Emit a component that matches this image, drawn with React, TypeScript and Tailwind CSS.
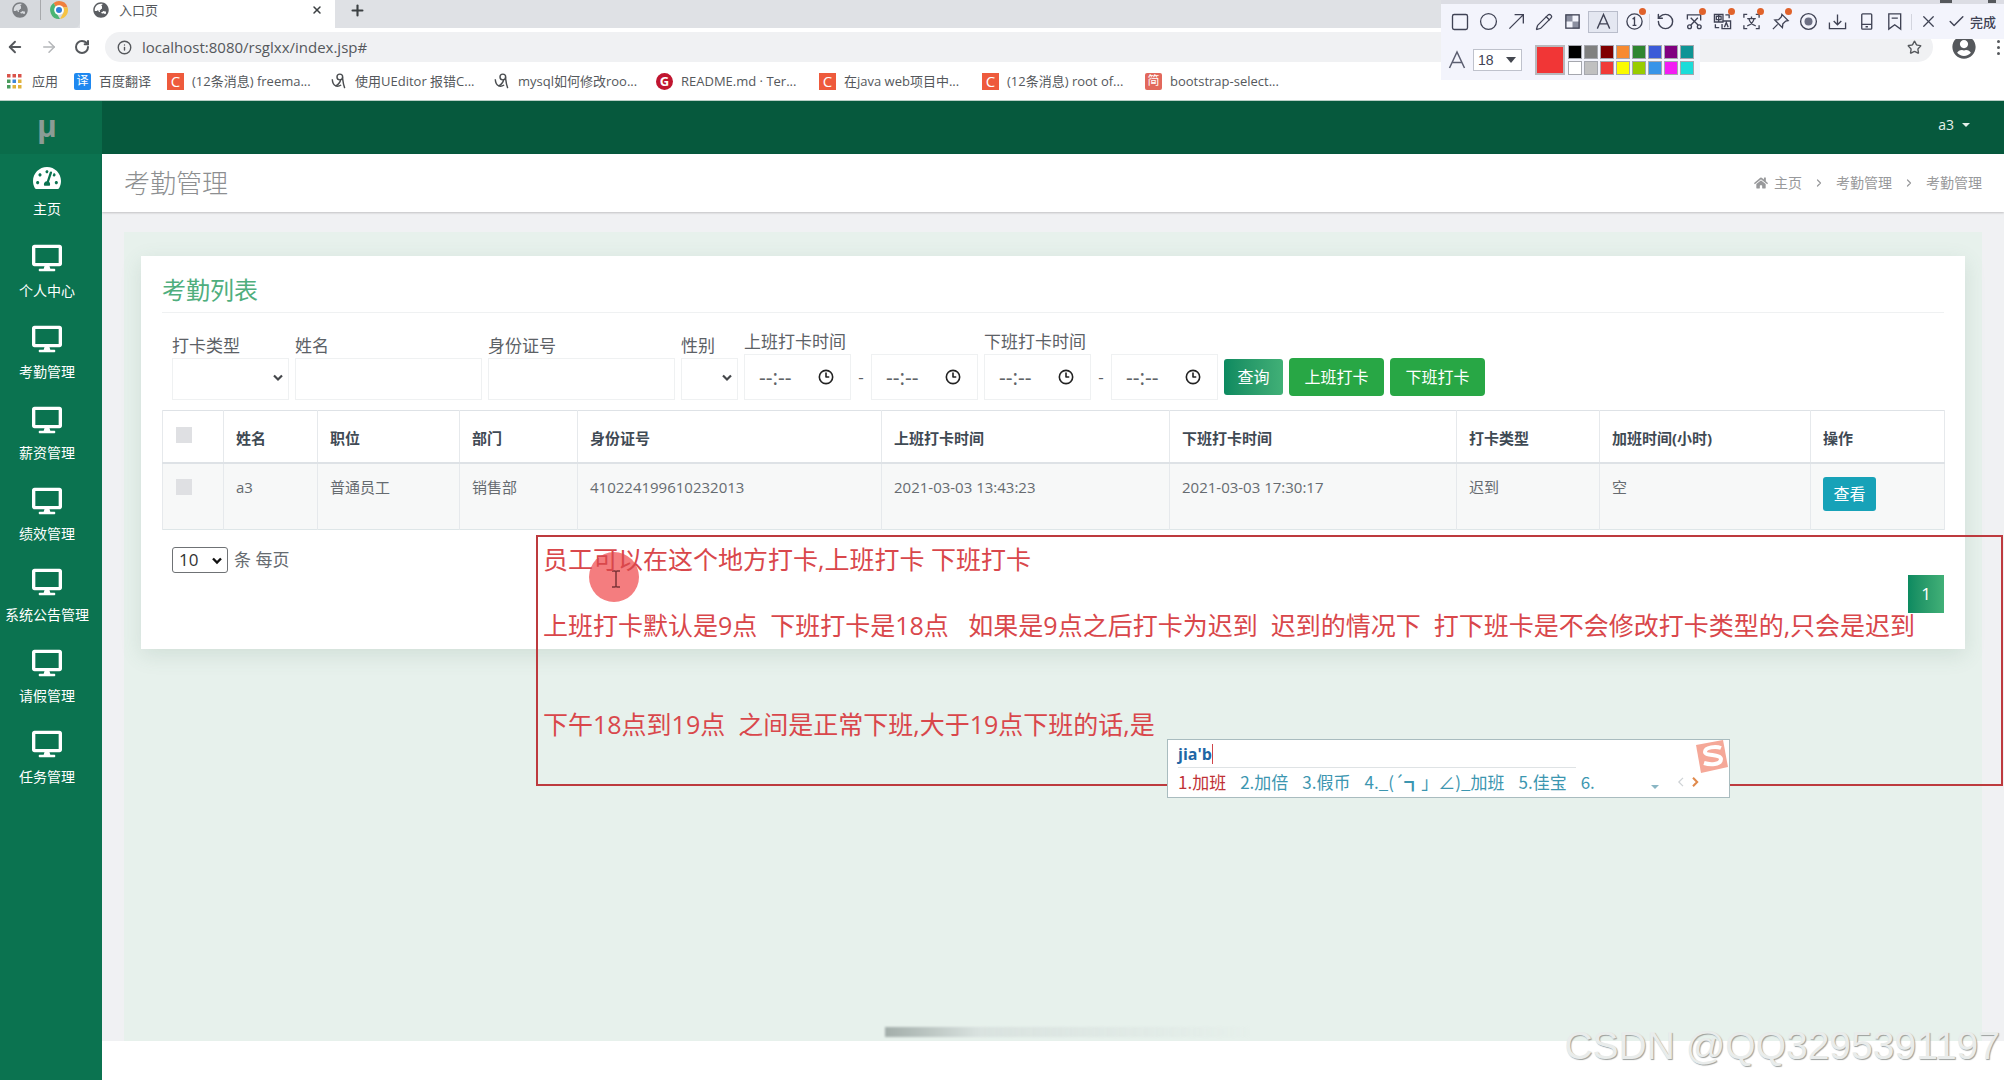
import React from "react";
import {
  ArrowLeft,
  ArrowRight,
  Check,
  ChevronRight,
  Circle,
  Clock3,
  Info,
  Pencil,
  Plus,
  RotateCcw,
  RotateCw,
  Square,
  Star,
  X,
} from "lucide-react";
import { FaDesktop, FaGlobeAsia, FaHome, FaTachometerAlt, FaUserCircle } from "react-icons/fa";

const FONT = "font-['Open_Sans','Noto_Sans_CJK_SC',sans-serif]";

/* ---------- browser chrome ---------- */

function BrowserSwirl() {
  return (
    <svg viewBox="0 0 20 20" className="size-5">
      <path d="M10 1a9 9 0 0 1 8.6 6.4L13 7a4.500 4.500 0 0 0-6 .4L4.600 3A9 9 0 0 1 10 1z" fill="#f0803c" />
      <path d="M18.600 7.400A9 9 0 0 1 11 19l3-5.500A4.500 4.500 0 0 0 13 7z" fill="#f6c343" />
      <path d="M11 19A9 9 0 0 1 4.600 3L7 7.400a4.500 4.500 0 0 0 1 6.600z" fill="#4bb573" />
      <circle cx="10" cy="10" r="4.800" fill="#fff" />
      <circle cx="10" cy="10" r="3" fill="#2f7fd6" />
    </svg>
  );
}

function AppsGrid() {
  const colours = ["#d9534a", "#d9534a", "#d9534a", "#4a9c5d", "#3f86d8", "#e0b23a", "#4a9c5d", "#e0b23a", "#e0b23a"];
  return (
    <svg viewBox="0 0 15 15" className="size-[15px]">
      {colours.map((c, i) => (
        <rect key={i} x={(i % 3) * 5.5} y={Math.floor(i / 3) * 5.5} width="3.500" height="3.500" fill={c} />
      ))}
    </svg>
  );
}

function BirdMark() {
  return (
    <svg viewBox="0 0 16 18" className="h-4 w-[17px]" fill="none" stroke="#4a4d50" strokeWidth="1.600">
      <path d="M1 7c.2 4 1.500 6.500 4 7.500C8 13 10 10.500 10.500 7" />
      <circle cx="9.500" cy="4.500" r="3.200" />
      <path d="M12.500 5c.6 5 .8 8 2.500 12M5 14.500c2 .8 4 .2 6-1" />
    </svg>
  );
}

function LetterMark({ text, tone }: { text: string; tone: "blue" | "orange" | "crimson" | "rose" }) {
  const tones = {
    blue: "bg-[#1e88f0] rounded-[2px] text-[12px]",
    orange: "bg-[#ee5a3c] text-[15px]",
    crimson: "bg-[#c0152f] rounded-full text-[13px] font-bold",
    rose: "bg-[#e2685c] rounded-[2px] text-[12px]",
  };
  return (
    <span className={`flex size-[17px] items-center justify-center leading-none text-white ${tones[tone]}`}>{text}</span>
  );
}

const bookmarks = [
  { icon: <LetterMark text="C" tone="orange" />, label: "(12条消息) freema..." },
  { icon: <BirdMark />, label: "使用UEditor 报错C..." },
  { icon: <BirdMark />, label: "mysql如何修改roo..." },
  { icon: <LetterMark text="G" tone="crimson" />, label: "README.md · Ter..." },
  { icon: <LetterMark text="C" tone="orange" />, label: "在java web项目中..." },
  { icon: <LetterMark text="C" tone="orange" />, label: "(12条消息) root of..." },
  { icon: <LetterMark text="简" tone="rose" />, label: "bootstrap-select..." },
];

function BrowserChrome() {
  return (
    <header className="bg-white text-[#55585c]">
      <div className="flex h-7 bg-[#dfe1e5]">
        <div className="flex w-20 items-center rounded-br-md bg-[#d6d9dd] pb-2 pl-3">
          <FaGlobeAsia className="size-4 text-[#7b7e82]" />
          <span className="ml-3 h-5 w-px bg-[#a7a9ac]" />
          <span className="ml-2">
            <BrowserSwirl />
          </span>
        </div>
        <div className="flex w-[255px] items-center bg-white pr-3 pb-2 pl-[13px]">
          <FaGlobeAsia className="size-4 text-[#5b5e62]" />
          <span className="ml-2.5 text-[13px] leading-5">入口页</span>
          <button aria-label="关闭标签页" className="ml-auto">
            <X className="size-3 text-[#3c4043]" strokeWidth={3} />
          </button>
        </div>
        <div className="flex grow items-center rounded-bl-md pb-2 pl-[14px]">
          <button aria-label="新标签页">
            <Plus className="size-[17px] text-[#3c4043]" strokeWidth={3} />
          </button>
        </div>
      </div>
      <div className="flex h-[34px] items-center pt-1">
        <button aria-label="后退" className="ml-1.5">
          <ArrowLeft className="size-[18px]" strokeWidth={2.5} />
        </button>
        <button aria-label="前进" className="ml-4">
          <ArrowRight className="size-[18px] text-[#b4b6b9]" strokeWidth={2} />
        </button>
        <button aria-label="刷新" className="ml-4">
          <RotateCw className="size-4" strokeWidth={3} />
        </button>
        <div className="mr-[26px] ml-[15px] flex h-[30px] grow items-center rounded-full bg-[#f0f1f3] pr-2.5 pl-3">
          <Info className="size-[15px]" strokeWidth={2.2} />
          <label htmlFor="address" className="ml-2.5 flex grow">
            <input
              id="address"
              aria-label="地址"
              defaultValue="localhost:8080/rsglxx/index.jsp#"
              className="h-6 grow bg-transparent text-[15px] leading-6 outline-none"
            />
          </label>
        </div>
        <button aria-label="收藏" className="-ml-[52px]">
          <Star className="size-[15px]" strokeWidth={2.2} />
        </button>
        <button aria-label="用户" className="ml-[30px]">
          <FaUserCircle className="size-6" />
        </button>
        <button aria-label="菜单" className="mr-1 ml-[21px] flex flex-col gap-[3px]">
          <span className="size-[3px] rounded-full bg-[#55585c]" />
          <span className="size-[3px] rounded-full bg-[#55585c]" />
          <span className="size-[3px] rounded-full bg-[#55585c]" />
        </button>
      </div>
      <nav className="flex h-[39px] items-center border-b border-[#b9cfc6] text-[13px] leading-5">
        <a href="#" className="flex w-[67px] items-center gap-2.5 pl-[7px]">
          <AppsGrid />
          应用
        </a>
        <a href="#" className="flex w-[93px] items-center gap-2 pl-[7px]">
          <LetterMark text="译" tone="blue" />
          百度翻译
        </a>
        <div className="flex pl-[7px]">
          {bookmarks.map((b) => (
            <a key={b.label} href="#" className="flex w-[163px] items-center gap-2 whitespace-nowrap">
              {b.icon}
              {b.label}
            </a>
          ))}
        </div>
      </nav>
    </header>
  );
}

/* ---------- snipping toolbar ---------- */

const ink = "#3f4254";

function Glyph({ children }: { children: React.ReactNode }) {
  return (
    <svg viewBox="0 0 20 20" className="size-[19px]" fill="none" stroke={ink} strokeWidth="1.400">
      {children}
    </svg>
  );
}

const drawTools = [
  { name: "矩形", icon: <Square className="size-5" strokeWidth={1.6} /> },
  { name: "椭圆", icon: <Circle className="size-[19px]" strokeWidth={1.6} /> },
  { name: "箭头", icon: <Glyph><path d="M2.500 17.500 17 3M8 2.800h9.200V12" /></Glyph> },
  { name: "画笔", icon: <Pencil className="size-[18px]" strokeWidth={1.7} /> },
  {
    name: "马赛克",
    icon: (
      <Glyph>
        <path d="M3 3h7v7H3zM10 10h7v7h-7z" fill="#8b8fa0" stroke="none" />
        <rect x="3" y="3" width="14" height="14" />
      </Glyph>
    ),
  },
  {
    name: "文字",
    active: true,
    icon: <Glyph><path d="M3.500 17.500 10 2.500l6.500 15M6 12.500h8" /></Glyph>,
  },
  {
    name: "序号",
    dot: true,
    icon: <Glyph><circle cx="10" cy="10" r="8" /><path d="M8 7.500 10 6v8M8 14h4" /></Glyph>,
  },
];

const actionTools = [
  { name: "撤销", icon: <RotateCcw className="size-[19px]" strokeWidth={1.8} /> },
  {
    name: "裁剪",
    dot: true,
    icon: (
      <Glyph>
        <path d="M2.500 8V3h14v6M6 6l8 8M13.500 6 6 14" />
        <circle cx="4.800" cy="15.500" r="2" />
        <circle cx="15" cy="15.500" r="2" />
      </Glyph>
    ),
  },
  {
    name: "翻译",
    dot: true,
    icon: (
      <Glyph>
        <path d="M1.500 2.500h9v8h-9zM3.500 4.500h5v3.500h-5zM6 2.500v8M11 9.500h7.500v8H9.500v-5M12 16l2-5 2 5M2.500 13v3.500h4M13 3h4v3.500" />
      </Glyph>
    ),
  },
  {
    name: "文字识别",
    dot: true,
    icon: (
      <Glyph>
        <path d="M2 6V2.500h3.500M14.500 2.500H18V6M2 14v3.500h3.500M18 14v3.500h-3.500M5.500 7h9M10 4.800V7M12.800 7c-1 4-3.500 6.500-7.300 7.500M7.200 7c1 4 3.500 6.500 7.300 7.500" />
      </Glyph>
    ),
  },
  {
    name: "钉住",
    dot: true,
    icon: <Glyph><path d="m11.500 2.500 6.500 6.500-2.500.5-3 3-.5 4-8-8 4-.5 3-3zM7 13l-5 5" /></Glyph>,
  },
  {
    name: "录屏",
    icon: <Glyph><circle cx="10" cy="10" r="8.300" /><circle cx="10" cy="10" r="4.200" fill="#6d7084" stroke="none" /></Glyph>,
  },
  { name: "保存", icon: <Glyph><path d="M1.500 11v6.500h17V11M10 2.500v11M6 9.500l4 4 4-4" /></Glyph> },
  {
    name: "发送到手机",
    icon: <Glyph><rect x="5" y="2" width="10.500" height="16" rx="1" /><path d="M5 13h10.500M9 15.500h2.500" /></Glyph>,
  },
  {
    name: "收藏截图",
    icon: <Glyph><path d="M4 2h12.500v16L10.200 13.500 4 18zM7 6.500h6.500" /></Glyph>,
  },
];

function ToolButton({ tool }: { tool: { name: string; icon: React.ReactNode; dot?: boolean; active?: boolean } }) {
  return (
    <button
      aria-label={tool.name}
      className={`relative flex h-[22px] flex-1 items-center justify-center ${
        tool.active ? "mx-0.5 border border-[#b9bdcb] bg-[#e4e7f1]" : ""
      }`}
    >
      {tool.icon}
      {tool.dot && <span className="absolute -top-[3px] right-0.5 size-[7px] rounded-full bg-[#e0622b]" />}
    </button>
  );
}

const palette = [
  "bg-black", "bg-[#808080]", "bg-[#800000]", "bg-[#f78a30]", "bg-[#2f8630]", "bg-[#3b5bd8]", "bg-[#800080]", "bg-[#0f9496]",
  "bg-white", "bg-[#c0c0c0]", "bg-[#f03a38]", "bg-[#fbfb00]", "bg-[#98cc00]", "bg-[#3894e8]", "bg-[#f31bf3]", "bg-[#1bdcd9]",
];

function SnipToolbar() {
  return (
    <div className="absolute top-0 right-0 z-20 w-[563px] text-[#3f4254]">
      <div className="flex h-1 items-start justify-end gap-9 bg-[#dcdde4] pr-2">
        <span className="h-[3px] w-3 bg-[#55585c]" />
        <span className="h-[3px] w-2 bg-[#55585c]" />
      </div>
      <div className="flex h-[35px] items-center bg-[#f3f4fc] pl-[5px]">
        <div className="flex w-[202px]">
          {drawTools.map((t) => (
            <ToolButton key={t.name} tool={t} />
          ))}
        </div>
        <span className="mx-px h-4 w-px bg-[#d3d5de]" />
        <div className="flex w-[258px]">
          {actionTools.map((t) => (
            <ToolButton key={t.name} tool={t} />
          ))}
        </div>
        <span className="mx-0.5 h-4 w-px bg-[#d3d5de]" />
        <button aria-label="取消" className="flex w-[29px] justify-center">
          <X className="size-[19px]" strokeWidth={1.6} />
        </button>
        <button className="flex items-center gap-1 pl-1 text-[13px] leading-5 font-medium whitespace-nowrap">
          <Check className="size-[19px]" strokeWidth={1.8} />
          完成
        </button>
      </div>
      <div className="flex h-[41px] w-[259px] items-center bg-[#f3f4fc] pl-1.5">
        <svg viewBox="0 0 20 20" className="size-5" fill="none" stroke="#5b5e70" strokeWidth="1.500">
          <path d="M2.500 18 10 2l7.500 16M5.500 12.500h9" />
        </svg>
        <div className="relative ml-1.5">
          <select
            id="snip-size"
            aria-label="字号"
            defaultValue="18"
            className="block h-[22px] w-[49px] appearance-none border border-[#bfc2cc] bg-white pl-1 font-['Liberation_Sans',sans-serif] text-[14px] leading-5"
          >
            <option>18</option>
          </select>
          <span className="pointer-events-none absolute top-2 right-1.5 border-x-[5px] border-t-[6px] border-x-transparent border-t-[#44474f]" />
        </div>
        <button aria-label="当前颜色" className="ml-[13px] size-[30px] border-2 border-[#b9b9bd] bg-[#f13636]" />
        <div className="ml-[3px] grid grid-cols-8 gap-[2px]">
          {palette.map((c) => (
            <button key={c} aria-label="颜色" className={`size-[14px] border border-[#a5a7ae] ${c}`} />
          ))}
        </div>
      </div>
    </div>
  );
}

/* ---------- application ---------- */

const menu = ["个人中心", "考勤管理", "薪资管理", "绩效管理", "系统公告管理", "请假管理", "任务管理"];

function Sidebar() {
  return (
    <aside className="w-[102px] shrink-0 bg-[#0b7350] text-white">
      <div className="flex h-[53px] items-center justify-center bg-[#0a6c4a] pr-2 pb-1 text-[30px] font-bold text-[#8b9c95]">
        μ
      </div>
      <nav className="pr-2 text-[14px] leading-5 whitespace-nowrap">
        <a href="#" className="flex h-[82px] flex-col items-center pt-2.5">
          <FaTachometerAlt className="size-7" />
          <span className="mt-[7px]">主页</span>
        </a>
        {menu.map((m) => (
          <a key={m} href="#" className="flex h-[81px] flex-col items-center pt-[7px]">
            <FaDesktop className="size-[30px]" />
            <span className="mt-2">{m}</span>
          </a>
        ))}
      </nav>
    </aside>
  );
}

const box = "border border-[#eff1f2] bg-white outline-none";

function SelectField({ id, label, width }: { id: string; label: string; width: string }) {
  return (
    <div className={`relative ${width}`}>
      <label htmlFor={id} className="block">
        {label}
      </label>
      <select id={id} className={`h-[42px] w-full appearance-none ${box}`}>
        <option></option>
      </select>
      <svg
        viewBox="0 0 10 8"
        className="pointer-events-none absolute right-1.5 bottom-[18px] h-2 w-2.5"
        fill="none"
        stroke="#44474a"
        strokeWidth="2.200"
      >
        <path d="m1 1.500 4 4 4-4" />
      </svg>
    </div>
  );
}

function TextField({ id, label }: { id: string; label: string }) {
  return (
    <div className="w-[187px]">
      <label htmlFor={id} className="block">
        {label}
      </label>
      <input id={id} type="text" className={`h-[42px] w-full px-3 ${box}`} />
    </div>
  );
}

function TimeInput({ id, label }: { id: string; label?: string }) {
  return (
    <div className={`flex h-[46px] w-[107px] items-center pr-4 pl-3.5 ${box}`}>
      <input
        id={id}
        aria-label={label}
        placeholder="--:--"
        className="w-full min-w-0 bg-transparent text-[21px] leading-7 outline-none placeholder:text-[#5f6468]"
      />
      <Clock3 className="size-4 shrink-0 text-[#222]" strokeWidth={2.4} />
    </div>
  );
}

function TimeRange({ id, label }: { id: string; label: string }) {
  return (
    <div>
      <label htmlFor={id} className="block">
        {label}
      </label>
      <div className="flex items-center">
        <TimeInput id={id} />
        <span className="w-5 text-center">-</span>
        <TimeInput id={`${id}-end`} label={`${label} 结束`} />
      </div>
    </div>
  );
}

const columns = [
  { title: "姓名", width: "w-[94px]", value: "a3" },
  { title: "职位", width: "w-[142px]", value: "普通员工" },
  { title: "部门", width: "w-[118px]", value: "销售部" },
  { title: "身份证号", width: "w-[304px]", value: "410224199610232013" },
  { title: "上班打卡时间", width: "w-[288px]", value: "2021-03-03 13:43:23" },
  { title: "下班打卡时间", width: "w-[287px]", value: "2021-03-03 17:30:17" },
  { title: "打卡类型", width: "w-[143px]", value: "迟到" },
  { title: "加班时间(小时)", width: "w-[211px]", value: "空" },
];

const tick = "block size-4 appearance-none bg-[#dfe0e3]";

function AttendanceTable() {
  return (
    <table className="mt-2.5 w-full table-fixed border-collapse text-left text-[15px] leading-5">
      <thead>
        <tr className="h-[52px] border-t border-b-2 border-[#dee2e6] align-top text-[#3f4a54]">
          <th className="w-[61px] border-x border-[#e6e9ec] px-[13px] pt-4">
            <input type="checkbox" aria-label="全选" className={tick} />
          </th>
          {columns.map((c) => (
            <th key={c.title} className={`border-x border-[#e6e9ec] px-3 pt-[17px] font-bold ${c.width}`}>
              {c.title}
            </th>
          ))}
          <th className="w-[134px] border-x border-[#e6e9ec] px-3 pt-[17px] font-bold">操作</th>
        </tr>
      </thead>
      <tbody>
        <tr className="h-[67px] border-b border-[#dee6e8] bg-[#f7f8f8] align-top text-[#666b70]">
          <td className="border-x border-[#e6e9ec] px-[13px] pt-[15px]">
            <input type="checkbox" aria-label="选择 a3" className={tick} />
          </td>
          {columns.map((c) => (
            <td key={c.title} className="border-x border-[#e6e9ec] px-3 pt-[13px]">
              {c.value}
            </td>
          ))}
          <td className="border-x border-[#e6e9ec] px-3 pt-[13px]">
            <button className="h-[34px] w-[53px] rounded-[3px] bg-[#17a2b8] text-[16px] text-white">查看</button>
          </td>
        </tr>
      </tbody>
    </table>
  );
}

function AttendanceCard() {
  return (
    <section className="bg-white px-[21px] pt-4 pb-9 shadow-[0_6px_20px_rgba(70,110,95,0.14)]">
      <h2 className="border-b border-[#eff1f2] pb-1 text-[24px] leading-9 text-[#4fae7d]">考勤列表</h2>
      <form className="mt-[17px] flex items-end gap-1.5 pl-2.5 text-[17px] leading-6 whitespace-nowrap text-[#5c6166]">
        <SelectField id="kind" label="打卡类型" width="w-[117px]" />
        <TextField id="name" label="姓名" />
        <TextField id="idcard" label="身份证号" />
        <SelectField id="gender" label="性别" width="w-[57px]" />
        <TimeRange id="clock-in" label="上班打卡时间" />
        <TimeRange id="clock-out" label="下班打卡时间" />
        <div className="flex items-center gap-1.5 pb-1 text-[16px] text-white">
          <button
            type="button"
            className="h-9 w-[59px] rounded-[3px] bg-linear-to-r from-[#0b8a60] to-[#41b077]"
          >
            查询
          </button>
          <button type="button" className="h-[38px] w-[95px] rounded bg-[#28a745]">
            上班打卡
          </button>
          <button type="button" className="h-[38px] w-[95px] rounded bg-[#28a745]">
            下班打卡
          </button>
        </div>
      </form>
      <AttendanceTable />
      <div className="mt-[17px] flex items-center gap-1.5 pl-2.5 text-[17px] leading-6 text-[#666b70]">
        <div className="relative">
          <select
            id="page-size"
            defaultValue="10"
            className="block h-[26px] w-14 appearance-none rounded-[3px] border border-[#6f7275] bg-white pl-1.5 text-[#333]"
          >
            <option>10</option>
          </select>
          <svg
            viewBox="0 0 10 8"
            className="pointer-events-none absolute top-2.5 right-1.5 h-2 w-2.5"
            fill="none"
            stroke="#111"
            strokeWidth="2.400"
          >
            <path d="m1 1.500 4 4 4-4" />
          </svg>
        </div>
        <label htmlFor="page-size">条 每页</label>
      </div>
      <div className="mt-0.5 flex justify-end">
        <button className="h-[38px] w-9 bg-linear-to-r from-[#0b8a60] to-[#41b077] text-[17px] text-white">
          1
        </button>
      </div>
    </section>
  );
}

function Crumbs() {
  return (
    <nav className="flex items-center text-[14px] leading-5 text-[#98999b]">
      <FaHome className="mr-1.5 size-3.5" />
      <a href="#">主页</a>
      <ChevronRight className="mx-[11px] size-3" strokeWidth={2.4} />
      <a href="#">考勤管理</a>
      <ChevronRight className="mx-[11px] size-3" strokeWidth={2.4} />
      <a href="#">考勤管理</a>
    </nav>
  );
}

/* ---------- overlays ---------- */

const note = `员工可以在这个地方打卡,上班打卡 下班打卡

上班打卡默认是9点  下班打卡是18点   如果是9点之后打卡为迟到  迟到的情况下  打下班卡是不会修改打卡类型的,只会是迟到


下午18点到19点  之间是正常下班,大于19点下班的话,是`;

function ImePopup() {
  return (
    <div className="absolute top-[739px] left-[1167px] z-20 h-[59px] w-[563px] border border-[#a9bcbf] bg-white px-2.5">
      <div className="flex h-[28px] w-[398px] items-center border-b border-[#dfe3e5] text-[16px] leading-6 font-bold text-[#1f66a5]">
        jia'b
        <span className="h-5 w-px bg-[#d0454a]" />
      </div>
      <ol className="flex items-center gap-3.5 font-['Noto_Sans_CJK_SC',sans-serif] text-[17px] leading-7 whitespace-nowrap text-[#3c96b0]">
        <li className="text-[#bf3236]">1.加班</li>
        <li>2.加倍</li>
        <li>3.假币</li>
        <li>4._(´┓」∠)_加班</li>
        <li>5.佳宝</li>
        <li>6.</li>
      </ol>
      <svg viewBox="0 0 34 34" className="absolute top-0 right-0 size-[34px]">
        <path d="M1 5 28 0l5 27-27 6z" fill="#f5a898" />
        <path d="M26 8c-5-2-16-1-16 4 0 4 16 2 16 7 0 6-11 6-17 4" fill="none" stroke="#fff" strokeWidth="4" />
      </svg>
      <div className="absolute right-[30px] bottom-2 flex items-center gap-2">
        <span className="mt-2.5 mr-2.5 border-x-[4px] border-t-[4px] border-x-transparent border-t-[#8ab6c4]" />
        <svg viewBox="0 0 8 12" className="h-2.5 w-[7px]" fill="none" stroke="#cfd3d6" strokeWidth="1.500">
          <path d="M7 1 2 6l5 5" />
        </svg>
        <svg viewBox="0 0 8 12" className="h-2.5 w-[7px]" fill="none" stroke="#e08a4c" strokeWidth="2.500">
          <path d="m1 1 5 5-5 5" />
        </svg>
      </div>
    </div>
  );
}

function Annotation() {
  return (
    <>
      <div className="absolute top-[552px] left-[589px] z-10 size-[50px] rounded-full bg-[#f47d7f]">
        <svg
          viewBox="0 0 10 18"
          className="absolute top-[18px] left-[22px] h-[18px] w-2.5"
          fill="none"
          stroke="#7c3438"
          strokeWidth="1.500"
        >
          <path d="M1 1h3l1 1 1-1h3M5 2v14M1 17h3l1-1 1 1h3" />
        </svg>
      </div>
      <textarea
        aria-label="批注文字"
        spellCheck={false}
        defaultValue={note}
        className="absolute top-[535px] right-px left-[536px] z-10 h-[251px] resize-none overflow-hidden border-2 border-[#bd3a3e] bg-transparent px-[5px] pt-1.5 text-[25px] leading-[33px] text-[#d9474b] outline-none"
      />
    </>
  );
}

export default function App() {
  return (
    <div className={`relative flex min-h-screen flex-col overflow-hidden bg-white ${FONT}`}>
      <BrowserChrome />
      <SnipToolbar />
      <div className="flex grow">
        <Sidebar />
        <div className="flex min-w-0 grow flex-col">
          <div className="flex h-[53px] items-center justify-end bg-[#06593d] pr-[34px] pb-1.5 text-[14px] text-[#e4f0ea]">
            <button className="flex items-center gap-2">
              a3
              <span className="border-x-[4px] border-t-[4px] border-x-transparent border-t-current" />
            </button>
          </div>
          <div className="z-[1] flex h-[58px] items-center justify-between bg-white px-[22px] shadow-[0_1px_2px_rgba(0,0,0,0.2)]">
            <h1 className="text-[26px] font-light text-[#8d8f91]">考勤管理</h1>
            <Crumbs />
          </div>
          <main className="flex grow flex-col bg-[#f0f1f3] px-[22px] pt-5">
            <div className="grow bg-[#e7f1ec] px-[17px] pt-6">
              <AttendanceCard />
            </div>
          </main>
          <footer className="h-[39px] bg-white" />
        </div>
      </div>
      <Annotation />
      <ImePopup />
      <div className="absolute top-[1027px] left-[885px] z-10 h-2.5 w-[370px] bg-linear-to-r from-[#a3aeaa] via-[#d9e2df] via-25% to-transparent blur-[1px]" />
      <p className="absolute right-1 bottom-2 z-10 font-['Liberation_Sans',sans-serif] text-[39px] leading-[52px] text-[#e9eceb] [text-shadow:1px_1px_1px_#9b9f9d]">
        CSDN @QQ3295391197
      </p>
    </div>
  );
}
